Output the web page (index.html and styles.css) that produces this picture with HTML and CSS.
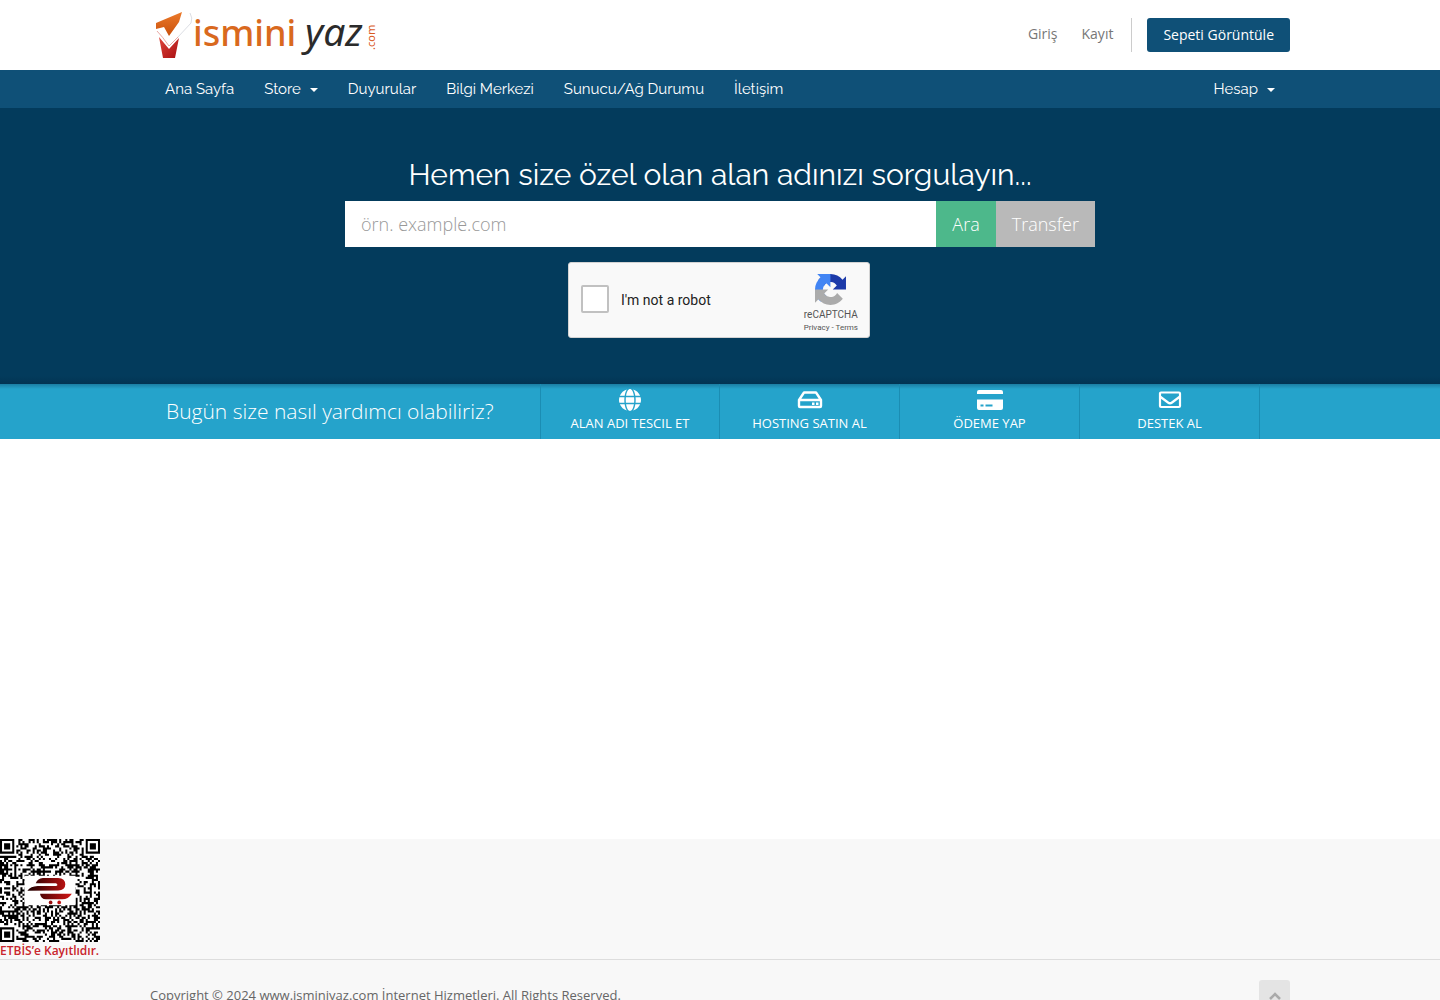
FILE: index.html
```html
<!DOCTYPE html>
<html lang="tr">
<head>
<meta charset="utf-8">
<meta name="viewport" content="width=device-width, initial-scale=1">
<title>isminiyaz.com</title>
<link rel="stylesheet" href="styles.css">
</head>
<body>
<header class="header">
  <div class="container header-row">
    <a class="logo" href="#" aria-label="isminiyaz.com">
      <svg width="230" height="60" viewBox="0 5 230 60">
        <defs>
          <linearGradient id="orange" x1="0" y1="0" x2="0" y2="1"><stop offset="0" stop-color="#ec7a2a"/><stop offset="1" stop-color="#c9500c"/></linearGradient>
          <linearGradient id="red" x1="0" y1="0" x2="1" y2="1"><stop offset="0" stop-color="#e0453a"/><stop offset="1" stop-color="#a80f12"/></linearGradient>
        </defs>
        <path d="M6 23L32 12 29 22 19 36 14 27 6 29Z" fill="url(#orange)"/>
        <path d="M9 37L19 49 29 38 25 58 13 58Z" fill="url(#red)"/>
        <path d="M7 31Q12 36 19 46L28 37" fill="none" stroke="#e9a9a4" stroke-width="1"/>
        <path d="M40 13Q43 18 41 23L28 37" fill="none" stroke="#dcdee4" stroke-width="1"/>
        <text class="logo-name" x="43" y="46">ismini</text>
        <text class="logo-accent" x="155" y="46">yaz</text>
        <text class="logo-tld" transform="translate(225 50) rotate(-90)">.com</text>
      </svg>
    </a>
    <div class="account">
      <a href="#">Giriş</a>
      <a href="#">Kayıt</a>
      <span class="divider"></span>
      <button class="cart" type="button">Sepeti Görüntüle</button>
    </div>
  </div>
</header>

<nav class="nav">
  <div class="container nav-row">
    <a href="#">Ana Sayfa</a>
    <a href="#">Store<i class="caret"></i></a>
    <a href="#">Duyurular</a>
    <a href="#">Bilgi Merkezi</a>
    <a href="#">Sunucu/Ağ Durumu</a>
    <a href="#">İletişim</a>
    <a class="nav-end" href="#">Hesap<i class="caret"></i></a>
  </div>
</nav>

<section class="hero">
  <h1>Hemen size özel olan alan adınızı sorgulayın...</h1>
  <form class="search">
    <input type="text" placeholder="örn. example.com" aria-label="Alan adı">
    <button class="find" type="button">Ara</button>
    <button class="transfer" type="button">Transfer</button>
  </form>
  <div class="captcha">
    <input type="checkbox" id="robot">
    <label for="robot">I'm not a robot</label>
    <div class="captcha-brand">
      <svg width="31" height="31" viewBox="0 0 64 64">
        <path d="M64 31.955l-.033-1.37V4.687l-7.16 7.16C50.948 4.674 42.033.093 32.05.093c-10.4 0-19.622 4.96-25.458 12.64l11.736 11.86a15.55 15.55 0 0 1 4.754-5.334c2.05-1.6 4.952-2.906 8.968-2.906.485 0 .86.057 1.135.163 4.976.393 9.288 3.14 11.828 7.124l-8.307 8.307L64 31.953" fill="#1c3aa9"/>
        <path d="M31.862.094l-1.37.033H4.594l7.16 7.16C4.58 13.147 0 22.06 0 32.046c0 10.4 4.96 19.622 12.64 25.458L24.5 45.768a15.55 15.55 0 0 1-5.334-4.754c-1.6-2.05-2.906-4.952-2.906-8.968 0-.485.057-.86.163-1.135.393-4.976 3.14-9.288 7.124-11.828l8.307 8.307L31.86.095" fill="#4285f4"/>
        <path d="M.001 32.045l.033 1.37v25.898l7.16-7.16c5.86 7.173 14.774 11.754 24.76 11.754 10.4 0 19.622-4.96 25.458-12.64l-11.736-11.86a15.55 15.55 0 0 1-4.754 5.334c-2.05 1.6-4.952 2.906-8.968 2.906-.485 0-.86-.057-1.135-.163-4.976-.393-9.288-3.14-11.828-7.124l8.307-8.307L0 32.047" fill="#ababab"/>
      </svg>
      <span>reCAPTCHA</span>
      <small><a href="#">Privacy</a> - <a href="#">Terms</a></small>
    </div>
  </div>
</section>

<section class="help">
  <div class="container help-row">
    <p>Bugün size nasıl yardımcı olabiliriz?</p>
    <a href="#">
      <svg width="22" height="22" viewBox="0 0 496 496" fill="currentColor"><path d="M336.500 152C321.700 60.700 286.700 0 248 0S174.300 60.700 159.500 152h177zM152 248c0 22.200 1.200 43.500 3.300 64h185.300c2.100-20.500 3.300-41.800 3.300-64s-1.200-43.500-3.300-64H155.300c-2.100 20.500-3.300 41.800-3.300 64zm324.700-96c-28.600-67.900-86.500-120.400-158-141.600 24.400 33.800 41.200 84.700 50 141.600h108zM177.200 10.400C105.800 31.600 47.800 84.100 19.300 152h108c8.700-56.900 25.500-107.800 49.900-141.600zM487.400 184H372.700c2.100 21 3.300 42.500 3.300 64s-1.200 43-3.300 64h114.600c5.500-20.500 8.600-41.800 8.600-64s-3.100-43.500-8.500-64zM120 248c0-21.500 1.200-43 3.300-64H8.600C3.200 204.500 0 225.800 0 248s3.200 43.500 8.600 64h114.600c-2-21-3.200-42.500-3.200-64zm39.500 96c14.800 91.300 49.800 152 88.500 152s73.700-60.700 88.500-152h-177zm159.300 141.600c71.400-21.200 129.400-73.700 158-141.600h-108c-8.800 56.900-25.600 107.800-50 141.600zM19.300 344c28.600 67.900 86.500 120.400 158 141.600-24.400-33.800-41.200-84.700-50-141.600h-108z"/></svg>
      ALAN ADI TESCIL ET
    </a>
    <a href="#">
      <svg width="26" height="22" viewBox="0 0 26 22"><path d="M2 11L7 3.500H19L24 11V17a1 1 0 0 1-1 1H3a1 1 0 0 1-1-1ZM2 11H24" fill="none" stroke="currentColor" stroke-width="2.400" stroke-linejoin="round"/><path d="M15 13.500h2.500v2.500h-2.500zM19 13.500h2.500v2.500h-2.500z" fill="currentColor"/></svg>
      HOSTING SATIN AL
    </a>
    <a href="#">
      <svg width="26" height="22" viewBox="0 0 26 22"><path d="M0 5V3a2 2 0 0 1 2-2H24a2 2 0 0 1 2 2V5ZM0 10.500H26V19a2 2 0 0 1-2 2H2a2 2 0 0 1-2-2ZM3.500 15.500v2h3v-2ZM8.500 15.500v2h7v-2Z" fill="currentColor" fill-rule="evenodd"/></svg>
      ÖDEME YAP
    </a>
    <a href="#">
      <svg width="24" height="22" viewBox="0 0 24 22"><path d="M3 3.500H21a1 1 0 0 1 1 1V17a1 1 0 0 1-1 1H3a1 1 0 0 1-1-1V4.500a1 1 0 0 1 1-1ZM2 7.500L10 13.500Q12 15 14 13.500L22 7.500" fill="none" stroke="currentColor" stroke-width="2.200"/></svg>
      DESTEK AL
    </a>
  </div>
</section>

<main class="content"></main>

<aside class="registry">
  <a class="seal" href="#">
    <svg width="100" height="103" viewBox="0 0 49 49" preserveAspectRatio="none" role="img" aria-label="ETBİS QR">
      <defs><linearGradient id="seal" gradientUnits="userSpaceOnUse" x1="14" x2="35" y1="0" y2="0"><stop offset="0" stop-color="#200000"/><stop offset="1" stop-color="#d01515"/></linearGradient></defs>
      <path fill="#fff" d="M0 0H49V49H0Z"/>
      <path id="modules" fill="#000"/>
      <path fill="#fff" d="M12 17.500H37V31.500H12Z"/>
      <path fill="url(#seal)" d="M13.400 24.600Q15 22.600 18.500 22.400H27.500Q28.800 21.900 27.500 21H17.500Q18.500 18.600 21 18.500H28.500Q32 18.700 32 21.500T28.500 24.500ZM19.600 26H35.200Q33.500 28.600 30.500 28.700H22.500Q20 28.500 19.600 26Z"/>
      <circle cx="24.800" cy="30.200" r=".9" fill="#991010"/><circle cx="29" cy="30.200" r=".9" fill="#c01414"/>
    </svg>
    <span>ETBİS’e Kayıtlıdır.</span>
  </a>
</aside>

<footer class="footer">
  <div class="container footer-row">
    <p>Copyright © 2024 www.isminiyaz.com İnternet Hizmetleri. All Rights Reserved.</p>
    <a class="to-top" href="#" aria-label="Yukarı">
      <svg width="14" height="10" viewBox="0 0 14 10"><path d="M2 8L7 3L12 8" fill="none" stroke="#aaa" stroke-width="2.500"/></svg>
    </a>
  </div>
</footer>
<script src="qr.js"></script>
</body>
</html>
```
FILE: styles.css
```css
* { box-sizing: border-box; }
body {
  margin: 0;
  background: #fff;
  color: #666;
  font: 14px/20px "Open Sans", "Noto Sans", sans-serif;
}
a { color: inherit; text-decoration: none; }
p, h1 { margin: 0; }
button { border: 0; font: inherit; color: #fff; cursor: pointer; }
svg { display: block; flex: none; }
.container { max-width: 1170px; margin: 0 auto; padding: 0 15px; }

.header-row { display: flex; justify-content: space-between; align-items: center; height: 70px; }
.logo-name { font: 500 36px "Noto Sans", sans-serif; fill: #d9691e; }
.logo-accent { font: italic 39px "Noto Sans", sans-serif; fill: #2b2b2b; }
.logo-tld { font: 11px "Noto Sans", sans-serif; fill: #d9591e; }
.account { display: flex; align-items: center; gap: 24px; color: #777; }
.account a { padding-bottom: 2px; }
.divider { width: 1px; height: 34px; background: #ccc; margin: 0 -9px 0 -6px; }
.cart { height: 34px; padding: 0 16px; border-radius: 3px; background: #0f5077; }

.nav { background: #0f5077; color: #fff; font: 15px/38px Raleway, Lato, sans-serif; }
.nav-row { display: flex; }
.nav-row a { padding: 0 15px; }
.nav-row .nav-end { margin-left: auto; }
.caret {
  display: inline-block;
  margin-left: 9px;
  vertical-align: middle;
  border: 4px solid transparent;
  border-top-color: currentColor;
  border-bottom: 0;
}

.hero {
  display: flex;
  flex-direction: column;
  align-items: center;
  padding: 49px 15px 46px;
  background: linear-gradient(to top, #023453, #033b5c 8px);
}
.hero h1 { color: #fff; font: 400 30px/36px Raleway, Lato, sans-serif; }
.search { display: flex; width: 100%; max-width: 750px; height: 46px; margin-top: 8px; font-size: 18px; font-weight: 300; }
.search input { flex: 1; min-width: 0; border: 0; padding: 0 16px; font: inherit; background: #fff; }
.search input::placeholder { color: #999; opacity: 1; }
.search button { padding: 0 16px; }
.search .find { background: #4db88b; }
.search .transfer { background: #b9b9b9; }
.captcha {
  display: flex;
  align-items: center;
  width: 302px;
  height: 76px;
  margin: 15px 2px 0 0;
  padding: 0 11px 0 12px;
  border: 1px solid #d3d3d3;
  border-radius: 3px;
  background: #f9f9f9;
  color: #222;
  font: 14px/17px Roboto, sans-serif;
}
.captcha input { appearance: none; width: 28px; height: 28px; margin: 0 12px 2px 0; border: 2px solid #c1c1c1; border-radius: 2px; background: #fff; }
.captcha-brand { display: flex; flex-direction: column; align-items: center; margin-left: auto; padding-top: 8px; color: #555; font-size: 10px; line-height: 14px; }
.captcha-brand svg { margin-bottom: 3px; }
.captcha-brand small { font-size: 8px; line-height: 12px; }

.help { background: linear-gradient(#1b7ea3, #25a3cb 5px); color: #fff; }
.help-row { display: grid; grid-template-columns: 390px repeat(4, 180px); height: 55px; }
.help-row p { padding: 12px 0 0 16px; font-size: 21px; line-height: 30px; font-weight: 300; }
.help-row a {
  display: flex;
  flex-direction: column;
  align-items: center;
  gap: 3px;
  padding-top: 5px;
  border-right: 1px solid #1b8db3;
  font-size: 13px;
  line-height: 18px;
}
.help-row p + a { border-left: 1px solid #1b8db3; }

.content { min-height: 400px; }
.registry { background: #f8f8f8; border-bottom: 1px solid #ddd; }
.seal { display: block; width: 100px; height: 120px; color: #c9252c; font: 600 12px/18px "Open Sans", sans-serif; white-space: nowrap; }
.footer { background: #f8f8f8; font-size: 13px; }
.footer-row { display: flex; justify-content: space-between; padding-top: 20px; padding-bottom: 20px; }
.footer-row p { padding-top: 5px; }
.to-top { display: flex; align-items: center; justify-content: center; width: 31px; height: 31px; border-radius: 3px 3px 0 0; background: #e4e4e4; }
```
FILE: qr.js
```js
// Fills the seal with a grid of modules and three finder squares.
const size = 49;
let seed = 20240;
const next = () => (seed = (seed * 16807) % 2147483647) / 2147483647;
const finder = (x, y) => {
  const d = Math.max(Math.abs(x - 3), Math.abs(y - 3));
  return d === 3 || d <= 1;
};
let path = "";
for (let y = 0; y < size; y++) {
  for (let x = 0; x < size; x++) {
    let on = next() < 0.52;
    const right = x >= size - 8, bottom = y >= size - 8;
    if ((x < 8 || right) && (y < 8 || bottom) && !(right && bottom)) {
      on = finder(right ? x - size + 7 : x, bottom ? y - size + 7 : y);
    }
    if (on) path += `M${x} ${y}h1v1h-1z`;
  }
}
document.getElementById("modules").setAttribute("d", path);
```
